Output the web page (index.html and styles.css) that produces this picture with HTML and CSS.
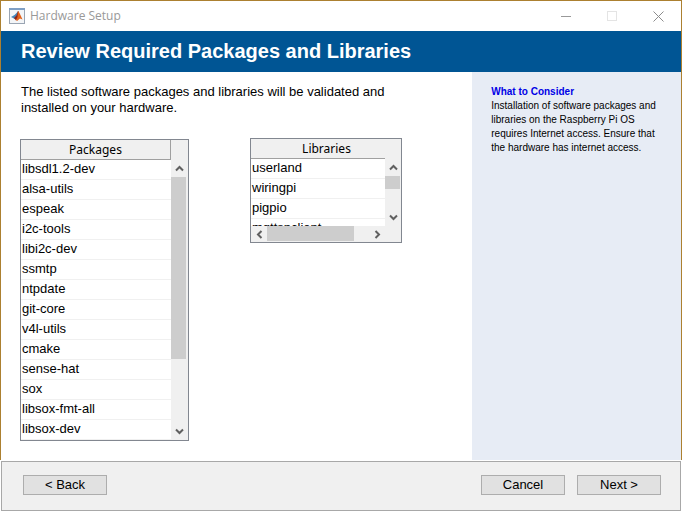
FILE: index.html
```html
<!DOCTYPE html>
<html lang="en">
<head>
<meta charset="utf-8">
<title>Hardware Setup</title>
<link rel="stylesheet" href="styles.css">
</head>
<body>
<div class="window">
  <header class="titlebar">
    <svg class="app-icon" width="16" height="16" viewBox="0 0 16 16" aria-hidden="true">
      <rect x="0.5" y="0.5" width="15" height="15" fill="#f3f5f7" stroke="#9aa5b3"/>
      <rect x="0" y="0" width="16" height="2" fill="#7f9fc4"/>
      <path d="M2 9L5.500 7L8 4.500L9 3L8.500 8L5.500 11L4 10Z" fill="#4587bb"/>
      <path d="M5 10L7.500 7.500L9 3L10 4L9 10L7 12.500Z" fill="#8c2418"/>
      <path d="M9 3L10.500 5L13.500 11.500L11 10.500L8 13L7 12L8.500 9Z" fill="#e2631c"/>
    </svg>
    <span class="titlebar-text">Hardware Setup</span>
    <button class="caption-button" type="button" aria-label="Minimize">
      <svg width="11" height="11" viewBox="0 0 11 11"><path d="M0 5.500H10" stroke="#999"/></svg>
    </button>
    <button class="caption-button" type="button" aria-label="Maximize" disabled>
      <svg width="11" height="11" viewBox="0 0 11 11"><rect x="0.5" y="0.5" width="9" height="9" fill="none" stroke="#e4e4e4"/></svg>
    </button>
    <button class="caption-button" type="button" aria-label="Close">
      <svg width="11" height="11" viewBox="0 0 11 11"><path d="M0.500 0.500L10.500 10.500M10.500 0.500L0.500 10.500" stroke="#8c8c8c"/></svg>
    </button>
  </header>
  <h1 class="banner">Review Required Packages and Libraries</h1>
  <div class="content">
    <main class="main">
      <p class="intro">The listed software packages and libraries will be validated and installed on your hardware.</p>
      <div class="lists">
        <section class="list packages">
          <div class="viewport">
            <table>
              <thead><tr><th scope="col">Packages</th></tr></thead>
              <tbody>
                <tr><td>libsdl1.2-dev</td></tr>
                <tr><td>alsa-utils</td></tr>
                <tr><td>espeak</td></tr>
                <tr><td>i2c-tools</td></tr>
                <tr><td>libi2c-dev</td></tr>
                <tr><td>ssmtp</td></tr>
                <tr><td>ntpdate</td></tr>
                <tr><td>git-core</td></tr>
                <tr><td>v4l-utils</td></tr>
                <tr><td>cmake</td></tr>
                <tr><td>sense-hat</td></tr>
                <tr><td>sox</td></tr>
                <tr><td>libsox-fmt-all</td></tr>
                <tr><td>libsox-dev</td></tr>
              </tbody>
            </table>
          </div>
          <div class="vbar">
            <button type="button" aria-label="Scroll packages up"><svg width="9" height="7" viewBox="0 0 9 7"><path d="M1 5.500L4.500 2L8 5.500"/></svg></button>
            <div class="track"><div class="thumb"></div></div>
            <button type="button" aria-label="Scroll packages down"><svg width="9" height="7" viewBox="0 0 9 7"><path d="M1 1.500L4.500 5L8 1.500"/></svg></button>
          </div>
        </section>
        <section class="list libraries">
          <div class="viewport">
            <table>
              <thead><tr><th scope="col">Libraries</th></tr></thead>
              <tbody>
                <tr><td>userland</td></tr>
                <tr><td>wiringpi</td></tr>
                <tr><td>pigpio</td></tr>
                <tr><td>mqttsnclient</td></tr>
              </tbody>
            </table>
          </div>
          <div class="vbar">
            <button type="button" aria-label="Scroll libraries up"><svg width="9" height="7" viewBox="0 0 9 7"><path d="M1 5.500L4.500 2L8 5.500"/></svg></button>
            <div class="track"><div class="thumb"></div></div>
            <button type="button" aria-label="Scroll libraries down"><svg width="9" height="7" viewBox="0 0 9 7"><path d="M1 1.500L4.500 5L8 1.500"/></svg></button>
          </div>
          <div class="hbar">
            <button type="button" aria-label="Scroll libraries left"><svg width="7" height="9" viewBox="0 0 7 9"><path d="M5.500 1L2 4.500L5.500 8"/></svg></button>
            <div class="track"><div class="thumb"></div></div>
            <button type="button" aria-label="Scroll libraries right"><svg width="7" height="9" viewBox="0 0 7 9"><path d="M1.500 1L5 4.500L1.500 8"/></svg></button>
          </div>
        </section>
      </div>
    </main>
    <aside class="help">
      <h2>What to Consider</h2>
      <p>Installation of software packages and libraries on the Raspberry Pi OS requires Internet access. Ensure that the hardware has internet access.</p>
    </aside>
  </div>
  <footer class="footer">
    <button class="push" type="button">&lt; Back</button>
    <span class="spacer"></span>
    <button class="push" type="button">Cancel</button>
    <button class="push" type="button">Next &gt;</button>
  </footer>
</div>
</body>
</html>
```
FILE: styles.css
```css
* {
  box-sizing: border-box;
}

body {
  margin: 0;
  background: #fff;
  color: #000;
  font: 13px/16px "Liberation Sans", Arial, sans-serif;
}

h1, h2, p {
  margin: 0;
}

button {
  padding: 0;
  border: 0;
  color: inherit;
  font: inherit;
}

.window {
  display: flex;
  flex-direction: column;
  min-height: 100vh;
  border: 1px solid #ac8030;
}

.titlebar {
  display: flex;
  align-items: center;
  height: 30px;
  padding-left: 8px;
}

.titlebar-text {
  flex: 1;
  margin-left: 5px;
  color: #999;
  font: 12px/16px "Open Sans", "Noto Sans", sans-serif;
}

.caption-button {
  display: flex;
  align-items: center;
  justify-content: center;
  width: 46px;
  height: 30px;
  background: none;
}

.banner {
  padding: 8px 20px 9px;
  background: #005594;
  color: #fff;
  font-size: 20px;
  line-height: 24px;
}

.content {
  display: flex;
  flex: 1;
}

.main {
  flex: 1;
  padding: 12px 19px 0;
}

.intro {
  max-width: 380px;
  padding-left: 1px;
}

.lists {
  display: flex;
  align-items: flex-start;
  gap: 61px;
  margin-top: 22px;
}

.list {
  display: grid;
  grid-template-columns: 1fr auto;
  border: 1px solid #828790;
  background: #f0f0f0;
}

.packages {
  width: 169px;
  height: 302px;
  margin-top: 1px;
}

.libraries {
  grid-template-rows: 87px 16px;
  width: 152px;
}

.viewport {
  overflow: hidden;
}

table {
  width: 100%;
  border-collapse: separate;
  border-spacing: 0;
}

th {
  height: 20px;
  padding: 0;
  border-bottom: 1px solid #a0a0a0;
  background: #f0f0f0;
  font: 12px/19px "Noto Sans", sans-serif;
}

.packages th {
  border-right: 1px solid #a0a0a0;
}

.libraries th {
  padding-left: 17px;
}

td {
  height: 20px;
  padding: 0 0 1px 1px;
  border-bottom: 1px solid #f0f0f0;
  background: #fff;
  line-height: 18px;
}

.vbar {
  display: flex;
  flex-direction: column;
  width: 17px;
  padding-top: 20px;
}

.vbar button,
.hbar button {
  display: flex;
  flex: none;
  align-items: center;
  justify-content: center;
  width: 16px;
  height: 17px;
  background: none;
}

.vbar svg,
.hbar svg {
  fill: none;
  stroke: #606060;
  stroke-width: 2;
}

.track {
  flex: 1;
}

.thumb {
  background: #cdcdcd;
}

.vbar .thumb {
  width: 15px;
}

.packages .thumb {
  height: 74%;
}

.libraries .vbar .thumb {
  height: 13px;
}

.hbar {
  display: flex;
  width: 134px;
}

.hbar button {
  height: 16px;
}

.hbar .thumb {
  width: 87px;
  height: 15px;
}

.help {
  width: 30.700%;
  padding: 13px 19px;
  background: #e7ecf5;
  font-size: 10px;
  line-height: 14px;
}

.help h2 {
  color: #0000e6;
  font-size: inherit;
}

.footer {
  display: flex;
  align-items: center;
  gap: 12px;
  height: 50px;
  padding: 0 19px 2px 21px;
  border: 1px solid #a8a8a8;
  outline: 1px solid #fff;
  background: #f0f0f0;
}

.spacer {
  flex: 1;
}

.push {
  width: 84px;
  height: 20px;
  border: 1px solid #adadad;
  background: #e1e1e1;
}
```
